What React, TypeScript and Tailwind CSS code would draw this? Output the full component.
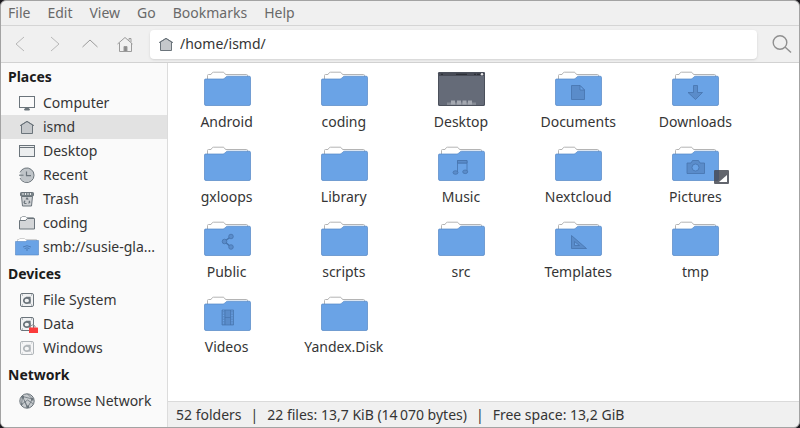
import type { ReactNode } from "react";
import clsx from "clsx";

type Glyph = "document" | "download" | "music" | "camera" | "share" | "ruler" | "film";

const menus = ["File", "Edit", "View", "Go", "Bookmarks", "Help"];

const folders: { name: string; glyph?: Glyph; desktop?: boolean; shared?: boolean }[] = [
  { name: "Android" },
  { name: "coding" },
  { name: "Desktop", desktop: true },
  { name: "Documents", glyph: "document" },
  { name: "Downloads", glyph: "download" },
  { name: "gxloops" },
  { name: "Library" },
  { name: "Music", glyph: "music" },
  { name: "Nextcloud" },
  { name: "Pictures", glyph: "camera", shared: true },
  { name: "Public", glyph: "share" },
  { name: "scripts" },
  { name: "src" },
  { name: "Templates", glyph: "ruler" },
  { name: "tmp" },
  { name: "Videos", glyph: "film" },
  { name: "Yandex.Disk" },
];

const glyphs: Record<Glyph, ReactNode> = {
  document: (
    <>
      <path d="M17.5 14.5h8.5l4.5 4.5v9.500h-13z" />
      <path d="M26 14.5V19h4.5z" fill="#6aa3e6" />
    </>
  ),
  download: <path d="M22.5 14.5h4v7h5L24.5 28.5 17 21.5h5.5z" />,
  music: (
    <>
      <path d="M20.5 26V14.5h9.5V25.5M20.5 17h9.5" fill="none" />
      <path d="M20.5 14.5h9.5v2.500h-9.5z" />
      <ellipse cx="18.5" cy="26.5" rx="2.5" ry="1.8" />
      <ellipse cx="28.2" cy="25.8" rx="2.5" ry="1.8" />
    </>
  ),
  camera: (
    <>
      <path d="M16 17h4l1.5-2.5h6L29 17h4.5v10.500H16z" />
      <circle cx="24.5" cy="21.5" r="3.5" fill="#6aa3e6" />
    </>
  ),
  share: (
    <>
      <path d="M28 15.5 21.5 20.5 28 26" fill="none" strokeWidth="1.5" />
      <circle cx="28" cy="15.5" r="2.3" />
      <circle cx="21.5" cy="20.5" r="2.3" />
      <circle cx="28" cy="26" r="2.3" />
    </>
  ),
  ruler: (
    <>
      <path d="M17.5 14.5v13h15z" />
      <path d="M20.5 20.5v4h5z" fill="#6aa3e6" />
    </>
  ),
  film: (
    <>
      <path d="M19 14h11.5v15H19z" stroke="none" />
      <g strokeWidth="0.7">
        <path d="M22 14v15M27.500 14v15M22 21.5h5.500" />
        <path d="M20.500 14v15M29 14v15" stroke="#6aa3e6" strokeWidth="1.2" strokeDasharray="1 1.5" />
        <path d="M19 14h11.5v15H19z" fill="none" />
      </g>
    </>
  ),
};

function FolderArt({ glyph }: { glyph?: Glyph }) {
  return (
    <svg className="h-9 w-12" viewBox="0 0 48 36" aria-hidden="true">
      <path
        d="M4.5 10V4.5q0-1 1-1H8l1-1.500q.5-.8 1.500-.8h9.500q1 0 1.500.8l1 1.500H43.500q1 0 1 1V10z"
        fill="#fff"
        stroke="#b4b4b4"
      />
      <path
        d="M1.5 9q0-1 1-1H20q1 0 1.600-.7l1.300-1.400q.6-.7 1.600-.7H46q1.500 0 1.500 1.300V33q0 1.500-1.500 1.500H3q-1.500 0-1.500-1.500z"
        fill="#6aa3e6"
        stroke="#5486c4"
        strokeWidth="0.7"
      />
      {glyph && (
        <g fill="#5a8cca" stroke="#4674ad" strokeWidth="0.8">
          {glyphs[glyph]}
        </g>
      )}
    </svg>
  );
}

function DesktopArt() {
  return (
    <svg className="h-9 w-12" viewBox="0 0 48 36" aria-hidden="true">
      <rect x="1" y="1" width="47" height="34" rx="1.5" fill="#656b78" />
      <path d="M1 5V2.5Q1 1 2.500 1h44Q48 1 48 2.500V5z" fill="#474b56" />
      <path d="M19 3.300h11M37 3.300h2M40 3.300h3M4 3.300h2" stroke="#2d3038" strokeWidth="1.3" />
      <circle cx="45" cy="3.3" r="1.2" fill="#e8e8ea" />
      <path d="M10 34v-2.500h29V34z" fill="#868b95" />
      <path d="M14 29.500h4v4h-4zM20 29.500h4v4h-4zM25.500 29.500h4v4h-4zM31 29.500h4v4h-4z" fill="#a5a9b1" />
      <rect x="1.5" y="1.5" width="46" height="33" rx="1.5" fill="none" stroke="#4b505b" />
    </svg>
  );
}

/* Sidebar icons share a 24x20 box */
function SideIcon({ children }: { children: ReactNode }) {
  return (
    <svg className="h-5 w-6 shrink-0" viewBox="0 0 24 20" fill="#dcdee0" stroke="#6b747b" aria-hidden="true">
      {children}
    </svg>
  );
}

const driveShape = (
  <>
    <rect x="5.5" y="3.5" width="13" height="13" rx="1.5" fill="#f1f2f3" />
    <path d="M7 5h1M16 5h1M7 15h1M16 15h1" strokeWidth="0.8" />
    <ellipse cx="11.8" cy="10.5" rx="3" ry="2.7" fill="none" strokeWidth="1.7" />
    <path d="M11 7.3h4v6.5" fill="none" strokeWidth="1.3" />
  </>
);

const icons = {
  computer: (
    <SideIcon>
      <rect x="4.5" y="3.5" width="15" height="11" fill="#fbfbfb" />
      <path d="M10.5 15h3l1 2h-5z" fill="#6b747b" />
    </SideIcon>
  ),
  home: (
    <SideIcon>
      <path d="M6.5 8v8.5h11V8L12 4.500z" fill="#c5c8cb" />
      <path d="M5 8.700 12 4.300l7 4.400" fill="none" />
    </SideIcon>
  ),
  desktop: (
    <SideIcon>
      <rect x="4.5" y="4.5" width="15" height="11" fill="#eceeef" />
      <path d="M4.5 6.500h15" />
    </SideIcon>
  ),
  recent: (
    <SideIcon>
      <circle cx="12" cy="10" r="7" fill="#c0c5c9" stroke="none" />
      <path d="M5 7.500a7.300 7.300 0 1 1 0 5.500M4 10.200h4.500" fill="none" />
      <path d="M11.5 6.500v4.200h4.500" fill="none" strokeWidth="1.2" />
    </SideIcon>
  ),
  trash: (
    <SideIcon>
      <path d="M6.5 7.500h11l-1 9.500h-9z" fill="#cdd0d3" />
      <rect x="5.5" y="3.5" width="13" height="3.5" rx="0.8" fill="#7b848a" />
      <path d="M8 4v2M10.500 4v2M13 4v2M15.500 4v2" stroke="#e4e6e7" />
      <path
        d="m11 10.500 1-1.400 1.200 1.600M14 11.700l.8 1.500-1.300 1.200M11.500 14.500H9.800l-.7-1.300 1-1.600"
        fill="none"
        strokeWidth="1.2"
      />
    </SideIcon>
  ),
  folder: (
    <SideIcon>
      <path d="M5.5 8V4.500h1l.7-1h3.300l.8 1h7.200V8z" fill="#fff" stroke="#a2a8ac" />
      <path d="M4.500 7.500h6l1.800-2h7.200v10.500h-15z" fill="#d4d6d8" />
    </SideIcon>
  ),
  share: (
    <svg className="h-5 w-6 shrink-0" viewBox="0 0 24 20" aria-hidden="true">
      <path d="M2.500 6V2.500h1.500l.8-1h4.700l1 1h11V6z" fill="#fff" stroke="#c4c4c4" strokeWidth="0.8" />
      <path d="M.5 4.500h10l1.500-1h11.500V18H.5z" fill="#6aa3e6" stroke="#5486c4" strokeWidth="0.6" />
      <path d="M8 10q4-2.600 8 0M9.500 11.600q2.500-1.500 5 0" fill="none" stroke="#4674ad" strokeWidth="0.8" />
      <circle cx="12" cy="13" r="0.8" fill="#4674ad" />
    </svg>
  ),
  drive: <SideIcon>{driveShape}</SideIcon>,
  lockedDrive: (
    <SideIcon>
      {driveShape}
      <path d="M15.500 13.500V12q2.500-2.500 4.500 0v1.500" fill="none" stroke="#8d8f92" />
      <rect x="14" y="13.500" width="9" height="5.500" rx="0.5" fill="#fb3b3b" stroke="none" />
    </SideIcon>
  ),
  dimDrive: (
    <SideIcon>
      <g opacity="0.5">{driveShape}</g>
    </SideIcon>
  ),
  network: (
    <SideIcon>
      <circle cx="12" cy="10" r="7.2" fill="#c7cbce" />
      <path
        d="M7.500 5.500 17.500 8l-5 8.500L7.500 5.500l-1 8 6-4.500 6 4M17.500 8l-5-5M9.500 9.500l3 7"
        fill="none"
        strokeWidth="0.8"
      />
      <path
        d="M6.500 5H9v2.500H6.500zM16 7h2.500v2.500H16zM11.500 14.500H14V17h-2.500zM6 12.500h1.500V14H6z"
        fill="#6b747b"
        stroke="none"
      />
    </SideIcon>
  ),
};

const sections: { title: string; items: { label: string; icon: keyof typeof icons; active?: boolean }[] }[] = [
  {
    title: "Places",
    items: [
      { label: "Computer", icon: "computer" },
      { label: "ismd", icon: "home", active: true },
      { label: "Desktop", icon: "desktop" },
      { label: "Recent", icon: "recent" },
      { label: "Trash", icon: "trash" },
      { label: "coding", icon: "folder" },
      { label: "smb://susie-gla...", icon: "share" },
    ],
  },
  {
    title: "Devices",
    items: [
      { label: "File System", icon: "drive" },
      { label: "Data", icon: "lockedDrive" },
      { label: "Windows", icon: "dimDrive" },
    ],
  },
  { title: "Network", items: [{ label: "Browse Network", icon: "network" }] },
];

function ToolButton({ label, children }: { label: string; children: ReactNode }) {
  return (
    <button aria-label={label} className="flex h-full w-5 items-center justify-center">
      <svg className="size-5" viewBox="0 0 20 20" fill="none" stroke="currentColor" aria-hidden="true">
        {children}
      </svg>
    </button>
  );
}

export default function App() {
  return (
    <div className="h-screen bg-[#1d1b20] font-['Noto_Sans',sans-serif] text-sm text-[#353535]">
      <div className="flex h-full flex-col overflow-hidden rounded-md border border-[#a3a3a3] bg-[#f0f0f0]">
        <nav className="flex h-[25px] shrink-0 items-center gap-[17px] border-b border-[#d5d5d5] px-[7px] text-[#696969]">
          {menus.map((menu) => (
            <button key={menu}>{menu}</button>
          ))}
        </nav>

        {/* Toolbar */}
        <div className="flex h-[37px] shrink-0 items-center border-b border-[#d2d2d2] pr-[7px] pl-[9px]">
          <div className="flex h-full gap-[15px] pr-[15px] text-[#b8b8b8]">
            <ToolButton label="Back">
              <path d="M14 3 6 10l8 7" />
            </ToolButton>
            <ToolButton label="Forward">
              <path d="m6 3 8 7-8 7" />
            </ToolButton>
            <ToolButton label="Up">
              <path d="m2.5 13 7.500-7 7.500 7" stroke="#9b9b9b" />
            </ToolButton>
            <ToolButton label="Home">
              <g stroke="#9b9b9b">
                <path d="M2.5 10 10 3.500l7.500 6.500M4.500 9v8.500h12V9M14 6.500v-2h2V8" />
                <path d="M9 12.500h3v5H9z" fill="#8a8a8a" />
              </g>
            </ToolButton>
          </div>
          <div className="flex h-[29px] min-w-0 flex-1 items-center gap-0.5 rounded bg-white px-1 shadow-sm">
            {icons.home}
            <input
              aria-label="Location"
              defaultValue="/home/ismd/"
              className="min-w-0 flex-1 bg-transparent text-[#353535] outline-none"
            />
          </div>
          <button aria-label="Search" className="ml-[15px] flex size-5 items-center justify-center text-[#8f8f8f]">
            <svg className="size-5" viewBox="0 0 20 20" fill="none" stroke="currentColor" strokeWidth="1.4" aria-hidden="true">
              <circle cx="8" cy="8.5" r="6.8" />
              <path d="m13 13 6 5.500" />
            </svg>
          </button>
        </div>

        <div className="flex min-h-0 flex-1">
          <aside className="flex w-[167px] shrink-0 flex-col gap-px overflow-hidden border-r border-[#dcdcdc] bg-[#fafafa]">
            {sections.map((section) => (
              <section key={section.title}>
                <h2 className="flex h-7 items-center px-[7px] font-bold text-[#1b1b1b]">{section.title}</h2>
                <ul>
                  {section.items.map((item) => (
                    <li key={item.label}>
                      <button
                        className={clsx(
                          "flex h-6 w-full items-center gap-1 pl-[14px] text-left whitespace-nowrap",
                          item.active && "bg-[#e2e2e2]"
                        )}
                      >
                        {icons[item.icon]}
                        {item.label}
                      </button>
                    </li>
                  ))}
                </ul>
              </section>
            ))}
          </aside>

          <div className="flex min-w-0 flex-1 flex-col">
            <main className="min-h-0 flex-1 overflow-hidden bg-white pt-2 pr-[45px]">
              <ul className="grid grid-cols-5">
                {folders.map((folder) => (
                  <li key={folder.name} className="flex h-[75px] justify-center">
                    <button className="flex flex-col items-center gap-[5px]">
                      <span className="relative">
                        {folder.desktop ? <DesktopArt /> : <FolderArt glyph={folder.glyph} />}
                        {folder.shared && (
                          <svg className="absolute -right-2.5 -bottom-[3px] size-4" viewBox="0 0 16 16" aria-hidden="true">
                            <rect x="1" y="1" width="15" height="14" rx="1" fill="#464a53" opacity="0.85" />
                            <path d="M14 6v7H6z" fill="#fff" />
                          </svg>
                        )}
                      </span>
                      <span className="leading-5">{folder.name}</span>
                    </button>
                  </li>
                ))}
              </ul>
            </main>
            <footer className="flex h-[26px] shrink-0 items-center gap-[9px] border-t border-[#dadada] px-2 whitespace-nowrap">
              <span>52 folders</span>
              <span>|</span>
              <span>22 files: 13,7 KiB (14&#8201;070 bytes)</span>
              <span>|</span>
              <span>Free space: 13,2 GiB</span>
            </footer>
          </div>
        </div>
      </div>
    </div>
  );
}
